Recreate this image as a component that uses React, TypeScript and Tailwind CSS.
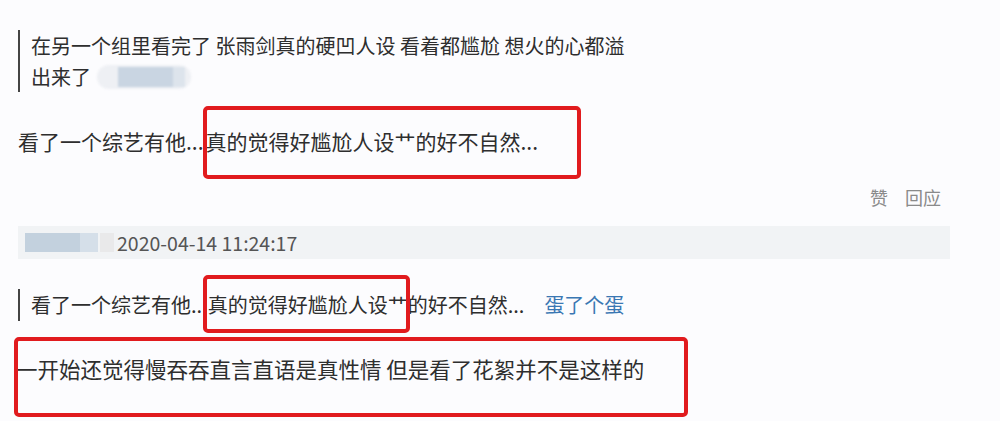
const font = "font-['Noto_Sans_CJK_SC','Noto_Sans',sans-serif]";

function RedBox({ className }: { className: string }) {
  return (
    <div
      className={`pointer-events-none absolute rounded-[5px] border-[4px] border-[#e11b1e] ${className}`}
    />
  );
}

export default function App() {
  return (
    <div
      className={`relative h-[421px] w-[1000px] overflow-hidden bg-[#fcfcfe] text-[#2e2e2e] ${font}`}
    >
      <div className="flex flex-col pt-[30px]">
        {/* quoted reply */}
        <div className="ml-[18px] border-l-2 border-[#444] pl-[11px] text-[20px] leading-[31px]">
          <p>在另一个组里看完了 张雨剑真的硬凹人设 看着都尴尬 想火的心都溢</p>
          <p className="flex items-center">
            出来了
            <span className="ml-[6px] flex h-[24px] w-[94px] items-center rounded-full bg-[#eef0f4] blur-[1px]">
              <span className="ml-[21px] h-[20px] w-[55px] bg-[#c9d5e2]" />
              <span className="h-[20px] w-[12px] bg-[#dde4ec]" />
            </span>
          </p>
        </div>

        <p className="ml-[18px] mt-[34px] text-[21px] leading-[30px]">
          看了一个综艺有他...<span className="ml-[2px]">真的觉得好尴尬人设艹的好不自然...</span>
        </p>

        <div className="mt-[29px] flex justify-end gap-[17px] pr-[59px] text-[18px] leading-[24px] text-[#8a8a8a]">
          <span>赞</span>
          <span>回应</span>
        </div>

        {/* reply header */}
        <div className="ml-[18px] mt-[17px] flex h-[33px] w-[932px] items-center bg-[#f1f3f5]">
          <span className="ml-[7px] h-[19px] w-[55px] bg-[#c3d1de] blur-[0.5px]" />
          <span className="h-[19px] w-[18px] bg-[#d5dfe9] blur-[0.5px]" />
          <span className="ml-[2px] h-[19px] w-[14px] bg-[#e9e9ea] blur-[0.5px]" />
          <span className="ml-[3px] text-[19.5px] text-[#555]">2020-04-14 11:24:17</span>
        </div>

        <div className="ml-[18px] mt-[30px] flex items-center border-l-2 border-[#444] pl-[11px] text-[20px] leading-[32px]">
          <span>看了一个综艺有他...真的觉得好尴尬人设艹的好不自然...</span>
          <span className="ml-[20px] text-[#3a77b3]">蛋了个蛋</span>
        </div>

        <p className="ml-[16px] mt-[33px] text-[21.5px] leading-[30px]">
          一开始还觉得慢吞吞直言直语是真性情 但是看了花絮并不是这样的
        </p>
      </div>

      <RedBox className="left-[203px] top-[106px] h-[73px] w-[378px]" />
      <RedBox className="left-[203px] top-[275px] h-[58px] w-[207px]" />
      <RedBox className="left-[14px] top-[337px] h-[80px] w-[674px]" />
    </div>
  );
}
